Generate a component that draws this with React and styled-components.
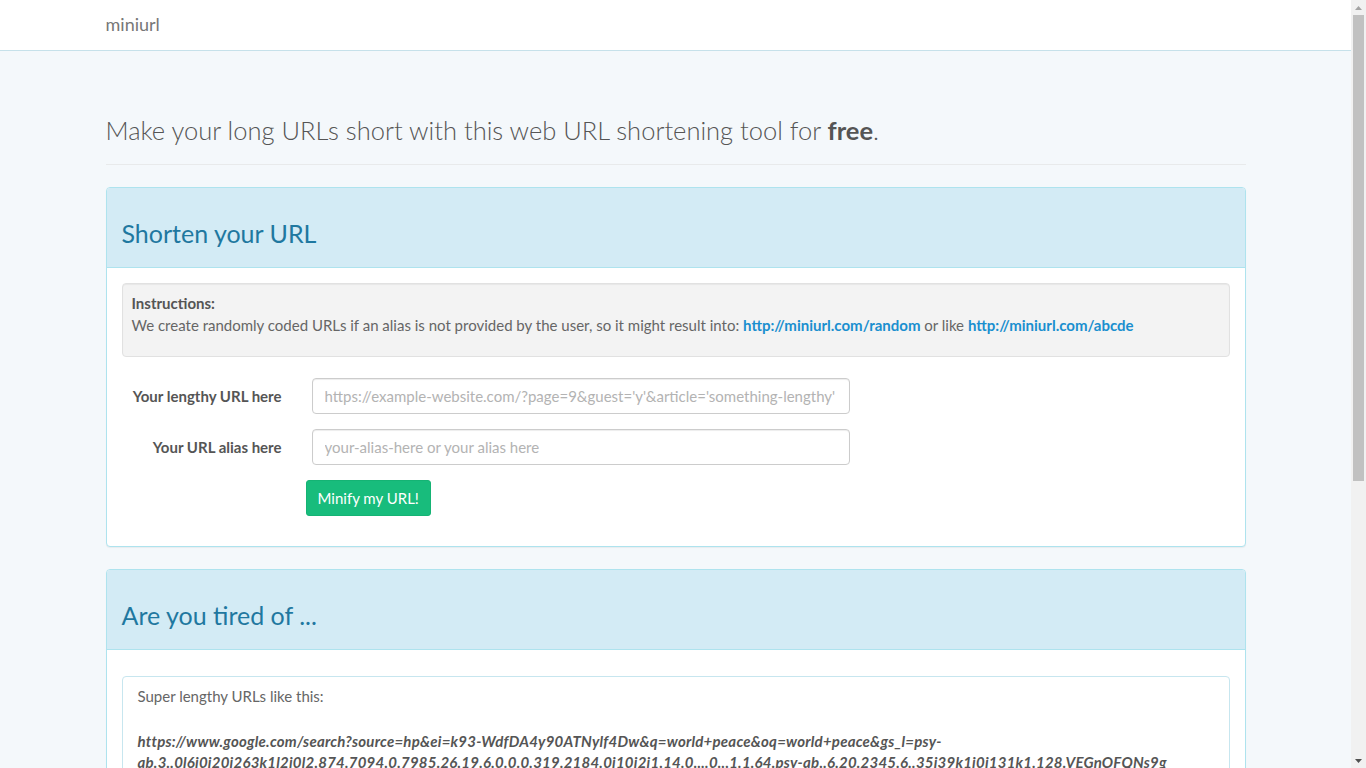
import React, { useState } from 'react'
import styled, { createGlobalStyle } from 'styled-components'

const GlobalStyle = createGlobalStyle`
  html, body {
    margin: 0;
    padding: 0;
    height: 100%;
    overflow: hidden;
  }
  body {
    background: #f4f8fb;
    font-family: Lato, "Open Sans", sans-serif;
    font-size: 15px;
    color: #666;
  }
  * {
    box-sizing: border-box;
  }
`

const Frame = styled.div`
  display: flex;
  height: 100vh;
`

const Main = styled.main`
  flex: 1;
  overflow: hidden;
`

// fake window scrollbar so the page is laid out in 1351px like the reference
const ScrollBar = styled.div`
  width: 15px;
  flex-shrink: 0;
  background: #f1f1f1;
  display: flex;
  flex-direction: column;
  align-items: center;
`

const Arrow = styled.div`
  height: 15px;
  display: flex;
  align-items: center;
  justify-content: center;
`

const Thumb = styled.div`
  width: 11px;
  height: 466px;
  background: #c1c1c1;
`

const Spacer = styled.div`
  flex: 1;
`

const Navbar = styled.nav`
  height: 51px;
  background: #fff;
  border-bottom: 1px solid #c6e1ea;
`

const Container = styled.div`
  width: 1170px;
  margin: 0 auto;
  padding: 0 15px;
`

const Brand = styled.a`
  display: inline-block;
  line-height: 48px;
  font-size: 18px;
  color: #777;
  text-decoration: none;
`

const PageHeader = styled.div`
  margin: 65px 0 22px;
  padding-bottom: 20px;
  border-bottom: 1px solid #e8eaeb;

  h3 {
    margin: 0;
    font-size: 25.5px;
    font-weight: 300;
    color: #555;
    line-height: 1.1;
  }
  b {
    font-weight: 700;
  }
`

const Panel = styled.section`
  background: #fff;
  border: 1px solid #aee3ee;
  border-radius: 4px;
  margin-bottom: 22px;
  box-shadow: 0 1px 1px rgba(0, 0, 0, 0.05);
`

const PanelHeading = styled.div`
  background: #d3ebf5;
  border-bottom: 1px solid #aee3ee;
  border-radius: 3px 3px 0 0;
  height: 80px;
  padding: 0 15px;
  display: flex;
  align-items: center;

  h2 {
    margin: 10px 0 0;
    font-size: 25px;
    font-weight: 400;
    color: #1f78a0;
  }
`

const PanelBody = styled.div`
  padding: ${(p) => p.$top || 15}px 15px 15px;
`

const Well = styled.div`
  background: #f3f3f3;
  border: 1px solid #e1e1e1;
  border-radius: 4px;
  padding: 8px 9px 15px;
  min-height: 74px;
  box-shadow: inset 0 1px 1px rgba(0, 0, 0, 0.05);
  line-height: 22px;

  strong {
    color: #555;
  }
`

const Link = styled.a`
  color: #1a8fcf;
  font-weight: 700;
  text-decoration: none;
`

const Form = styled.form`
  margin: 21px 0 15px;
  display: flex;
  flex-direction: column;
  gap: 15px;
`

const FormRow = styled.div`
  display: grid;
  grid-template-columns: 160px 538px;
  column-gap: 30px;
  align-items: center;
`

const Label = styled.label`
  text-align: right;
  font-weight: 700;
  color: #555;
`

const Input = styled.input`
  height: 36px;
  width: 100%;
  padding: 6px 12px;
  font-family: inherit;
  font-size: 15px;
  color: #555;
  background: #fff;
  border: 1px solid #ccc;
  border-radius: 4px;
  box-shadow: inset 0 1px 1px rgba(0, 0, 0, 0.075);

  &::placeholder {
    color: #b3b3b3;
  }
`

const Button = styled.button`
  margin-left: 184px;
  align-self: flex-start;
  height: 36px;
  padding: 0 11px;
  font-family: inherit;
  font-size: 15px;
  color: #fff;
  background: #18bc7c;
  border: 1px solid #15b374;
  border-radius: 3px;
  cursor: pointer;
`

const Outlined = styled.div`
  border: 1px solid #c7e6ef;
  border-radius: 4px;
  padding: 9px 15px 15px;
  line-height: 21px;
`

const Text = styled.p`
  margin: ${(p) => p.$margin || '0 0 24px'};
`

const LongUrl = styled.div`
  font-style: italic;
  font-weight: 700;
  color: #555;
  letter-spacing: 0.22px;
  word-break: break-all;
`

function App() {
  const [url, setUrl] = useState('')
  const [alias, setAlias] = useState('')

  return (
    <>
      <GlobalStyle />
      <Frame>
        <Main>
          <Navbar>
            <Container>
              <Brand href="#">miniurl</Brand>
            </Container>
          </Navbar>
          <Container>
            <PageHeader>
              <h3>
                Make your long URLs short with this web URL shortening tool for <b>free</b>.
              </h3>
            </PageHeader>

            <Panel>
              <PanelHeading>
                <h2>Shorten your URL</h2>
              </PanelHeading>
              <PanelBody>
                <Well>
                  <strong>Instructions:</strong>
                  <br />
                  We create randomly coded URLs if an alias is not provided by the user, so it might result into:{' '}
                  <Link href="#">http://miniurl.com/random</Link> or like <Link href="#">http://miniurl.com/abcde</Link>
                </Well>
                <Form onSubmit={(e) => e.preventDefault()}>
                  <FormRow>
                    <Label>Your lengthy URL here</Label>
                    <Input
                      value={url}
                      onChange={(e) => setUrl(e.target.value)}
                      placeholder="https://example-website.com/?page=9&guest='y'&article='something-lengthy'"
                    />
                  </FormRow>
                  <FormRow>
                    <Label>Your URL alias here</Label>
                    <Input
                      value={alias}
                      onChange={(e) => setAlias(e.target.value)}
                      placeholder="your-alias-here or your alias here"
                    />
                  </FormRow>
                  <Button type="submit">Minify my URL!</Button>
                </Form>
              </PanelBody>
            </Panel>

            <Panel>
              <PanelHeading>
                <h2>Are you tired of ...</h2>
              </PanelHeading>
              <PanelBody $top={26}>
                <Outlined>
                  <Text>Super lengthy URLs like this:</Text>
                  <LongUrl>
                    https://www.google.com/search?source=hp&ei=k93-WdfDA4y90ATNylf4Dw&q=world+peace&oq=world+peace&gs_l=psy-
                    <br />
                    ab.3..0l6j0i20i263k1l2j0l2.874.7094.0.7985.26.19.6.0.0.0.319.2184.0j10j2j1.14.0....0...1.1.64.psy-ab..6.20.2345.6..35i39k1j0i131k1.128.VEGnOFQNs9g
                  </LongUrl>
                  <Text $margin="24px 0 0">Which are hard to remember and even harder to share?</Text>
                </Outlined>
              </PanelBody>
            </Panel>
          </Container>
        </Main>
        <ScrollBar>
          <Arrow>
            <svg width="7" height="4" viewBox="0 0 7 4">
              <path d="M0 4 L3.5 0 L7 4 Z" fill="#a3a3a3" />
            </svg>
          </Arrow>
          <Thumb />
          <Spacer />
          <Arrow>
            <svg width="7" height="4" viewBox="0 0 7 4">
              <path d="M0 0 L3.5 4 L7 0 Z" fill="#505050" />
            </svg>
          </Arrow>
        </ScrollBar>
      </Frame>
    </>
  )
}

export default App
